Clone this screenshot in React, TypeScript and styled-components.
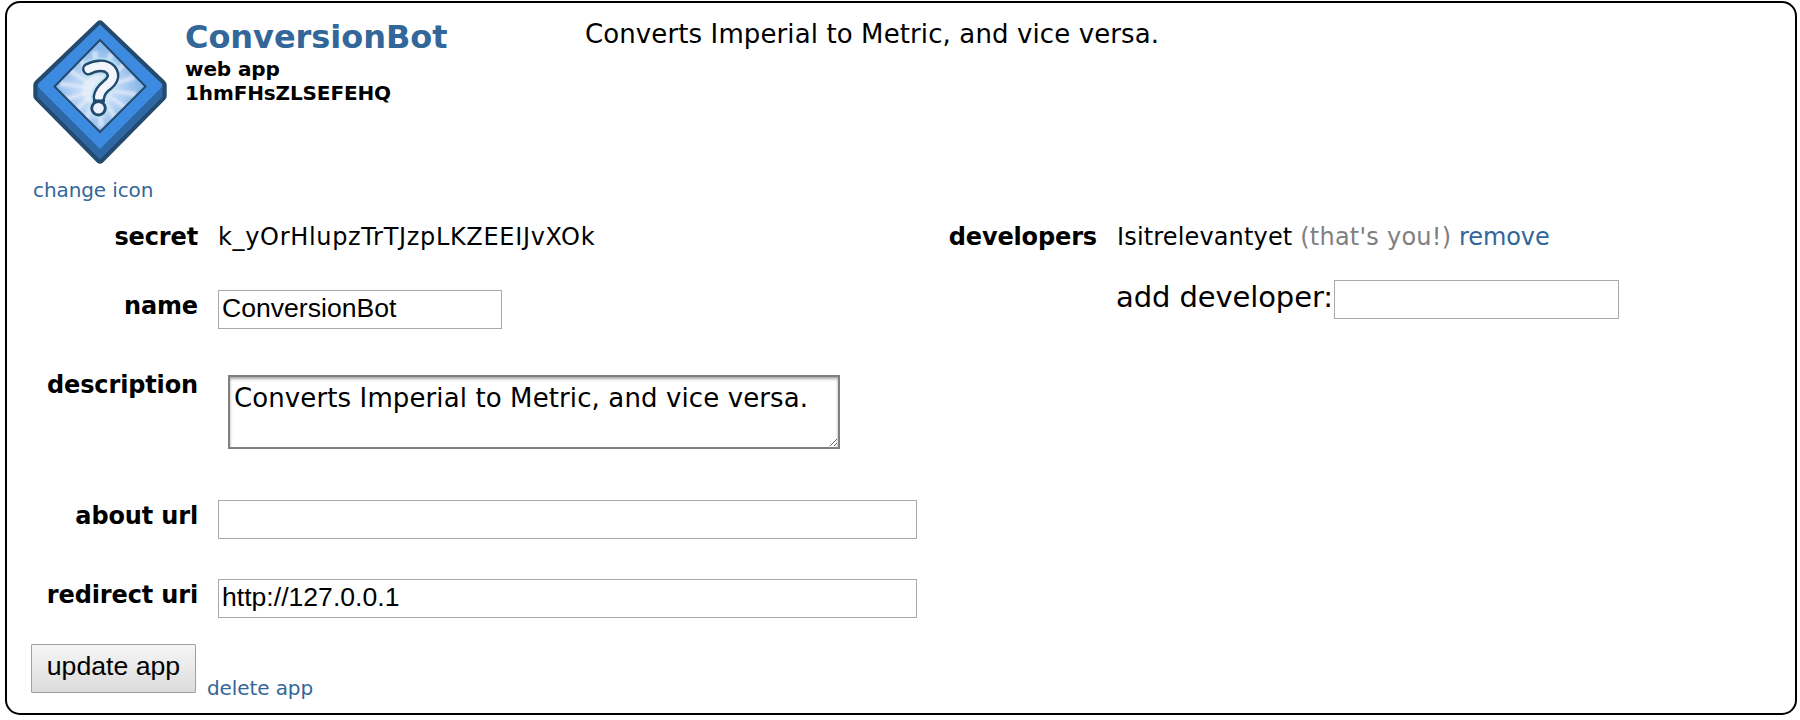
import React from "react";
import styled, { createGlobalStyle } from "styled-components";

const GlobalStyle = createGlobalStyle`
  * { box-sizing: border-box; }
  body {
    margin: 0;
    background: #fff;
    color: #000;
    font-family: "DejaVu Sans", Verdana, sans-serif;
  }
`;

const Card = styled.main`
  width: 1792px;
  height: 714px;
  margin: 1px 0 0 5px;
  padding: 15px 24px 0;
  border: 2px solid #000;
  border-radius: 15px;
`;

const Header = styled.header`
  display: flex;
  height: 204px;
`;

const IconColumn = styled.div`
  display: flex;
  flex-direction: column;
  width: 154px;
  padding: 2px 0 0 2px;
`;

const AppIcon = styled.svg`
  display: block;
  width: 134px;
  height: 144px;
  margin-bottom: 14px;
`;

const Link = styled.a<{ $size?: number; $track?: number }>`
  color: #369;
  text-decoration: none;
  white-space: nowrap;
  font-size: ${(p) => (p.$size ? p.$size + "px" : "inherit")};
  line-height: ${(p) => (p.$size ? "24px" : "inherit")};
  letter-spacing: ${(p) => p.$track ?? 0}px;
`;

const TitleColumn = styled.div`
  width: 400px;
  font-weight: bold;
`;

const Title = styled.h1`
  margin: 0;
  color: #369;
  font-size: 32px;
  line-height: 39px;
  letter-spacing: -0.05px;
`;

const Meta = styled.div<{ $track?: number }>`
  font-size: 20px;
  line-height: 24px;
  letter-spacing: ${(p) => p.$track ?? 0}px;
`;

const Summary = styled.p`
  margin: 0;
  font-size: 26px;
  line-height: 32px;
  letter-spacing: 0.11px;
`;

const Body = styled.div`
  display: grid;
  grid-template-columns: 899px 1fr;
`;

const Row = styled.div<{ $height: number }>`
  display: grid;
  grid-template-columns: 167px 1fr;
  column-gap: 20px;
  align-items: start;
  height: ${(p) => p.$height}px;
`;

const Label = styled.label`
  text-align: right;
  white-space: nowrap;
  font-weight: bold;
  font-size: 24px;
  line-height: 30px;
  letter-spacing: -0.14px;
`;

const Value = styled.div<{ $track?: number }>`
  white-space: nowrap;
  font-size: 24px;
  line-height: 30px;
  letter-spacing: ${(p) => p.$track ?? 0}px;
`;

const Muted = styled.span`
  color: gray;
  letter-spacing: 0.25px;
`;

const Field = styled.input<{ $width: number }>`
  display: block;
  width: ${(p) => p.$width}px;
  height: 39px;
  margin-top: -1px;
  padding: 0 3px 2px;
  border: 1px solid #a9a9a9;
  border-radius: 0;
  outline: none;
  background: #fff;
  color: #000;
  font: 26.6px "Liberation Sans", Arial, sans-serif;
`;

const Area = styled.textarea`
  display: block;
  width: 612px;
  height: 74px;
  margin: 5px 0 0 10px;
  padding: 5px 4px;
  border: 2px solid #808080;
  border-radius: 0;
  outline: none;
  overflow: hidden;
  box-shadow: inset 0 2px 3px rgba(0, 0, 0, 0.35);
  color: #000;
  font: 26px/32px "DejaVu Sans", Verdana, sans-serif;
  letter-spacing: 0.11px;
`;

const AddDeveloper = styled.div`
  display: flex;
  align-items: flex-start;
  margin-top: -10px;
`;

const AddLabel = styled.label`
  width: 217px;
  margin: -2px 0 0 -1px;
  padding-right: 1px;
  white-space: nowrap;
  font-size: 29px;
  line-height: 36px;
  letter-spacing: -0.1px;
  flex: 0 0 218px;
`;

const Actions = styled.div`
  display: flex;
  align-items: flex-start;
  gap: 11px;
  margin-top: -1px;
`;

const UpdateButton = styled.button`
  width: 165px;
  height: 49px;
  padding: 0 0 4px;
  border: 1px solid #a0a0a0;
  border-radius: 1px;
  background: linear-gradient(#f6f6f6, #dcdcdc);
  color: #000;
  font: 26.67px "Liberation Sans", Arial, sans-serif;
`;

const DeleteWrap = styled.div`
  display: flex;
  padding-top: 32px;
`;

const rays = Array.from({ length: 14 }, (_, i) => (i * 360) / 14 + 8);
const hook = "M55.5 49C62 45.500 72 44 77.500 49.500C83 56 78.500 62 73 66C68 70 66.500 73 66 77";

function DiamondIcon() {
  return (
    <AppIcon viewBox="0 0 134 144" aria-label="app icon">
      <defs>
        <radialGradient id="glow" gradientUnits="userSpaceOnUse" cx="64" cy="70" r="42">
          <stop offset="0" stopColor="#e4edfa" />
          <stop offset="0.5" stopColor="#bdd7f5" />
          <stop offset="1" stopColor="#8bb9ea" />
        </radialGradient>
        <clipPath id="window">
          <path d="M67 20 112.500 66.500 67 112 21.500 66.500Z" />
        </clipPath>
        <filter id="soft" x="-20%" y="-20%" width="140%" height="140%">
          <feGaussianBlur stdDeviation="1.3" />
        </filter>
        <filter id="edge" x="-5%" y="-5%" width="110%" height="110%">
          <feGaussianBlur stdDeviation="0.6" />
        </filter>
      </defs>
      <g filter="url(#edge)">
        <path
          d="M65 0.800Q67 -0.500 69 0.800L132 61Q133.700 63 133.700 65V76Q133.700 78 132 79.800L70 142.500Q67 145 64 142.500L2 79.800Q0.300 78 0.300 76V65Q0.300 63 2 61Z"
          fill="#24496e"
        />
        <path d="M67 4.500 129.500 66V77L67 139.500 4.500 77V66Z" fill="#2f67a4" />
        <path d="M67 4.500 129.500 64.500 128.500 67.500 67 129 5.500 67.500 4.500 64.500Z" fill="#3e8be0" />
        <path d="M67 20 112.500 66.500 67 112 21.500 66.500Z" fill="url(#glow)" />
        <g clipPath="url(#window)">
          <g filter="url(#soft)">
            {rays.map((a) => (
              <path
                key={a}
                d="M65 69 103 66V72Z"
                fill="#f0f2fb"
                opacity="0.6"
                transform={`rotate(${a} 65 69)`}
              />
            ))}
            <circle cx="64" cy="70" r="15" fill="#edf1fb" opacity="0.6" />
          </g>
        </g>
        <path d="M67 20 112.500 66.500 67 112 21.500 66.500Z" fill="none" stroke="#24496e" strokeWidth="2" />
        <g fill="none" strokeLinejoin="round">
          <g stroke="#b5e4ee" strokeWidth="16" strokeLinecap="round" filter="url(#soft)">
            <path d={hook} />
            <circle cx="65.500" cy="88.300" r="1.500" />
          </g>
          <path d={hook} stroke="#24496e" strokeWidth="12.800" strokeLinecap="round" />
          <circle cx="65.500" cy="88.300" r="8.200" fill="#24496e" />
          <path d={hook} stroke="#f3f5fc" strokeWidth="8" strokeLinecap="round" />
          <path d="M60 80.800H72" stroke="#24496e" strokeWidth="2.800" />
          <circle cx="65.500" cy="88.300" r="5.300" fill="#edf3fc" />
        </g>
      </g>
    </AppIcon>
  );
}

export default function App() {
  return (
    <>
      <GlobalStyle />
      <Card>
        <Header>
          <IconColumn>
            <DiamondIcon />
            <Link $size={20} $track={-0.1}>change icon</Link>
          </IconColumn>
          <TitleColumn>
            <Title>ConversionBot</Title>
            <Meta $track={-0.1}>web app</Meta>
            <Meta $track={-0.12}>1hmFHsZLSEFEHQ</Meta>
          </TitleColumn>
          <Summary>Converts Imperial to Metric, and vice versa.</Summary>
        </Header>
        <Body>
          <section>
            <Row $height={69}>
              <Label>secret</Label>
              <Value $track={0.67}>k_yOrHlupzTrTJzpLKZEEIJvXOk</Value>
            </Row>
            <Row $height={79}>
              <Label>name</Label>
              <Field $width={284} defaultValue="ConversionBot" />
            </Row>
            <Row $height={131}>
              <Label>description</Label>
              <Area spellCheck={false} defaultValue="Converts Imperial to Metric, and vice versa." />
            </Row>
            <Row $height={79}>
              <Label>about url</Label>
              <Field $width={699} />
            </Row>
            <Row $height={65}>
              <Label>redirect uri</Label>
              <Field $width={699} defaultValue="http://127.0.0.1" />
            </Row>
          </section>
          <section>
            <Row $height={69}>
              <Label>developers</Label>
              <Value $track={0.15}>
                Isitrelevantyet <Muted>(that's you!)</Muted> <Link $track={-0.1}>remove</Link>
              </Value>
            </Row>
            <Row $height={39}>
              <span />
              <AddDeveloper>
                <AddLabel>add developer:</AddLabel>
                <Field $width={285} />
              </AddDeveloper>
            </Row>
          </section>
        </Body>
        <Actions>
          <UpdateButton>update app</UpdateButton>
          <DeleteWrap>
            <Link $size={20} $track={-0.1}>delete app</Link>
          </DeleteWrap>
        </Actions>
      </Card>
    </>
  );
}
